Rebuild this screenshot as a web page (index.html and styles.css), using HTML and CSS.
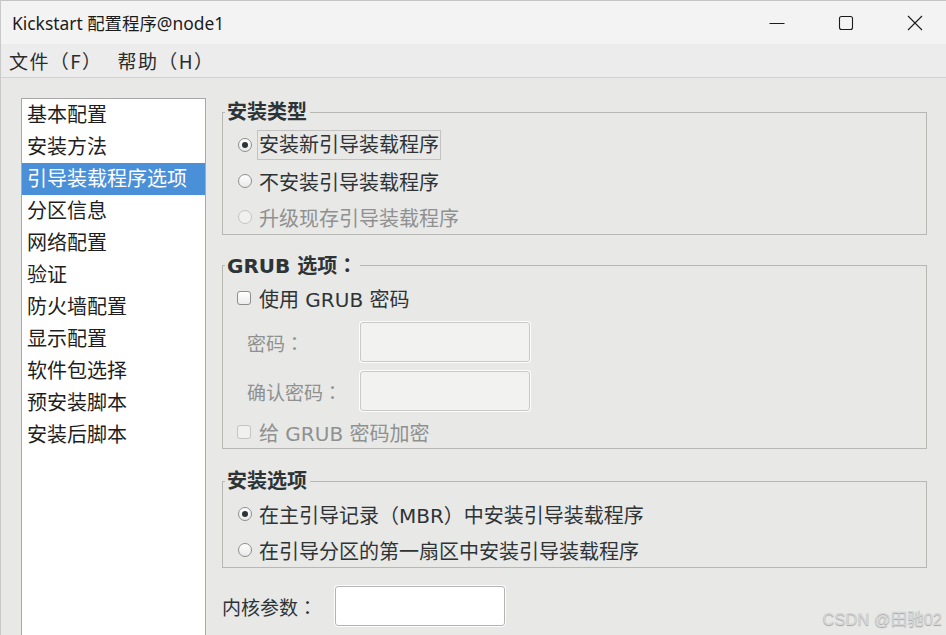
FILE: index.html
```html
<!DOCTYPE html>
<html lang="zh-CN">
<head>
    <meta charset="UTF-8">
    <title>Kickstart 配置程序@node1</title>
    <link rel="stylesheet" href="styles.css">
</head>
<body>
    <div class="window">
        <div class="titlebar">
            <span class="title">Kickstart 配置程序@node1</span>
            <div class="controls">
                <svg width="16" height="16" viewBox="0 0 16 16"><path d="M0.5 8.5h15" stroke="#1b1b1b" stroke-width="1" fill="none"/></svg>
                <svg width="16" height="16" viewBox="0 0 16 16"><rect x="1.5" y="1.5" width="13" height="13" rx="2" stroke="#1b1b1b" stroke-width="1.1" fill="none"/></svg>
                <svg width="16" height="16" viewBox="0 0 16 16"><path d="M1 1L15 15M15 1L1 15" stroke="#1b1b1b" stroke-width="1.1" fill="none"/></svg>
            </div>
        </div>

        <div class="menubar">
            <span class="menu">文件（F）</span>
            <span class="menu">帮助（H）</span>
        </div>

        <div class="main">
            <ul class="nav">
                <li>基本配置</li>
                <li>安装方法</li>
                <li class="active">引导装载程序选项</li>
                <li>分区信息</li>
                <li>网络配置</li>
                <li>验证</li>
                <li>防火墙配置</li>
                <li>显示配置</li>
                <li>软件包选择</li>
                <li>预安装脚本</li>
                <li>安装后脚本</li>
            </ul>

            <div class="panel">
                <fieldset class="group">
                    <legend>安装类型</legend>
                    <div class="body">
                        <div class="opt"><span class="radio checked"></span><span class="focus">安装新引导装载程序</span></div>
                        <div class="opt"><span class="radio"></span><span>不安装引导装载程序</span></div>
                        <div class="opt disabled"><span class="radio"></span><span>升级现存引导装载程序</span></div>
                    </div>
                </fieldset>

                <fieldset class="group grub">
                    <legend>GRUB 选项<span class="colon" lang="ja">：</span></legend>
                    <div class="body">
                        <div class="opt first"><span class="check"></span><span>使用 GRUB 密码</span></div>
                        <div class="field">
                            <span class="label">密码<span class="colon" lang="ja">：</span></span>
                            <span class="input off"></span>
                        </div>
                        <div class="field second">
                            <span class="label">确认密码<span class="colon" lang="ja">：</span></span>
                            <span class="input off"></span>
                        </div>
                        <div class="opt last disabled"><span class="check"></span><span>给 GRUB 密码加密</span></div>
                    </div>
                </fieldset>

                <fieldset class="group opts">
                    <legend>安装选项</legend>
                    <div class="body">
                        <div class="opt"><span class="radio checked"></span><span>在主引导记录（MBR）中安装引导装载程序</span></div>
                        <div class="opt"><span class="radio"></span><span>在引导分区的第一扇区中安装引导装载程序</span></div>
                    </div>
                </fieldset>

                <div class="kernel">
                    <span class="klabel">内核参数<span class="colon" lang="ja">：</span></span>
                    <span class="input"></span>
                </div>
            </div>
        </div>

        <div class="watermark">CSDN @田驰02</div>
    </div>
</body>
</html>
```

FILE: styles.css
```css
* {
    box-sizing: border-box;
}
body {
    margin: 0;
    width: 946px;
    height: 635px;
    overflow: hidden;
    background-color: #e8e8e7;
    font-family: "DejaVu Sans", "Noto Sans CJK SC", sans-serif;
    color: #2e3436;
}
.window {
    position: relative;
    height: 635px;
    border-left: 1px solid #c9c9c9;
}
.titlebar {
    height: 44px;
    background-color: #f3f3f3;
    border-top: 1px solid #c4c4c4;
    display: flex;
    align-items: center;
    justify-content: space-between;
    padding-left: 11px;
}
.title {
    font-family: "Noto Sans", "Noto Sans CJK SC", sans-serif;
    font-size: 17.4px;
    color: #1b1b1b;
}
.controls {
    display: flex;
    align-items: center;
    gap: 53px;
    padding-right: 23px;
}
.menubar {
    height: 34px;
    background-color: #ececec;
    border-bottom: 1px solid #d3d3d3;
    display: flex;
    align-items: center;
    padding-left: 8px;
    gap: 15px;
}
.menu {
    font-family: "Noto Sans CJK SC", sans-serif;
    font-size: 19px;
    letter-spacing: 1.4px;
    color: #2b2b2b;
}
.main {
    display: flex;
    gap: 16px;
    padding: 20px 0 0 20px;
}
.nav {
    list-style: none;
    margin: 0;
    padding: 0;
    width: 185px;
    height: 560px;
    background-color: #fff;
    border: 1px solid #a9a9a9;
    border-bottom: none;
}
.nav li {
    height: 32px;
    line-height: 32px;
    padding-left: 5px;
    font-size: 20px;
    color: #1e1e1e;
}
.nav li.active {
    background-color: #4a90d9;
    color: #fff;
}
.panel {
    width: 705px;
    padding-top: 2px;
}
.colon {
    font-family: "Noto Sans CJK JP", sans-serif;
    font-feature-settings: "locl" 0;
}
.group {
    margin: 0;
    padding: 0 0 0 14px;
    border: 1px solid #b7b7b4;
    min-width: 0;
}
.group legend {
    font-weight: bold;
    font-size: 20px;
    line-height: 24px;
    padding: 0 3px 0 2px;
    margin-left: -12px;
    color: #2e3436;
}
.body {
    padding-top: 4px;
}
.opt {
    height: 34px;
    display: flex;
    align-items: center;
    font-size: 20px;
    margin-bottom: 2px;
}
.opt:last-child {
    margin-bottom: 0;
}
.opt.disabled {
    color: #8f9190;
}
.focus {
    border: 1px solid #c3c3c3;
    line-height: 28px;
    padding: 0 1px;
    margin-left: -2px;
}
.radio {
    width: 14px;
    height: 14px;
    border-radius: 50%;
    border: 1px solid #8e8e8e;
    background: linear-gradient(#ffffff, #e9e9e9);
    margin-right: 7px;
    margin-left: 1px;
    position: relative;
    flex-shrink: 0;
}
.radio.checked::after {
    content: "";
    position: absolute;
    left: 3px;
    top: 3px;
    width: 6px;
    height: 6px;
    border-radius: 50%;
    background-color: #2e3436;
}
.disabled .radio,
.disabled .check {
    border-color: #c4c4c4;
    background: #f0f0ef;
}
.check {
    width: 14px;
    height: 14px;
    border-radius: 3px;
    border: 1px solid #8e8e8e;
    background: linear-gradient(#ffffff, #ececec);
    margin-right: 8px;
    flex-shrink: 0;
}
.grub {
    margin-top: 18px;
}
.grub .body {
    padding-top: 3px;
}
.field {
    display: flex;
    align-items: center;
    height: 40px;
    margin-top: 7px;
}
.field.second {
    margin-top: 9px;
}
.label {
    width: 123px;
    padding-left: 10px;
    font-size: 19px;
    color: #8f9190;
}
.input {
    display: block;
    width: 170px;
    height: 40px;
    background-color: #fff;
    border: 1px solid #b3b3b3;
    border-radius: 3px;
    box-shadow: 0 0 0 1px #fdfdfd;
}
.input.off {
    background-color: #f2f2f1;
    border-color: #c9c9c9;
}
.opt.first {
    margin-bottom: 0;
}
.opt.last {
    margin-top: 5px;
    height: 32px;
}
.opts {
    margin-top: 20px;
}
.kernel {
    display: flex;
    align-items: center;
    margin-top: 18px;
}
.klabel {
    width: 113px;
    font-size: 19px;
    color: #2e3436;
}
.watermark {
    position: absolute;
    right: 4px;
    bottom: 5px;
    font-family: "Liberation Sans", "Noto Sans CJK SC", sans-serif;
    font-size: 16.5px;
    color: #d6d6d6;
    text-shadow: 0 1px 1px rgba(0, 0, 0, 0.3);
}
```
